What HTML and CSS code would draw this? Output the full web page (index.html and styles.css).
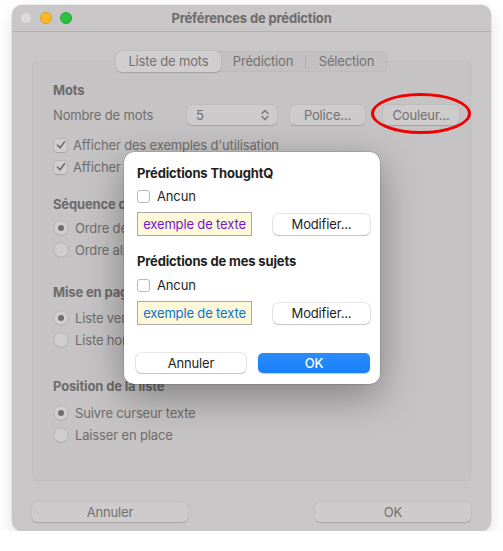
FILE: index.html
```html
<!DOCTYPE html>
<html lang="fr">
<head>
  <meta charset="UTF-8">
  <title>Préférences de prédiction</title>
  <link rel="stylesheet" href="styles.css">
</head>
<body>

  <div class="window">
    <div class="titlebar">
      <div class="lights">
        <span class="light close"></span>
        <span class="light min"></span>
        <span class="light max"></span>
      </div>
      <div class="title">Préférences de prédiction</div>
    </div>

    <div class="content">
      <div class="panel">
        <div class="segmented">
          <span class="seg seg-list active">Liste de mots</span>
          <span class="seg seg-pred">Prédiction</span>
          <span class="seg-sep"></span>
          <span class="seg seg-sel">Sélection</span>
        </div>

        <div class="heading h-mots">Mots</div>
        <div class="row count-row">
          <span class="label">Nombre de mots</span>
          <span class="popup">5
            <svg width="8" height="12" viewBox="0 0 8 12"><path d="M1 4.5 L4 1.5 L7 4.5 M1 7.5 L4 10.5 L7 7.5" fill="none" stroke="#777" stroke-width="1.4" stroke-linecap="round" stroke-linejoin="round"/></svg>
          </span>
          <span class="btn btn-police">Police...</span>
          <span class="btn btn-couleur">Couleur...</span>
        </div>
        <div class="row check-first"><span class="check on"><svg width="10" height="10" viewBox="0 0 10 10"><path d="M1.5 5.2 L4 7.8 L8.6 1.8" fill="none" stroke="#6d6d6d" stroke-width="1.6" stroke-linecap="round" stroke-linejoin="round"/></svg></span>Afficher des exemples d'utilisation</div>
        <div class="row"><span class="check on"><svg width="10" height="10" viewBox="0 0 10 10"><path d="M1.5 5.2 L4 7.8 L8.6 1.8" fill="none" stroke="#6d6d6d" stroke-width="1.6" stroke-linecap="round" stroke-linejoin="round"/></svg></span>Afficher les définitions</div>

        <div class="heading h-seq">Séquence des mots</div>
        <div class="row radio-first"><span class="radio on"></span>Ordre de fréquence</div>
        <div class="row"><span class="radio"></span>Ordre alphabétique</div>

        <div class="heading h-mise">Mise en page</div>
        <div class="row radio-first2"><span class="radio on"></span>Liste verticale</div>
        <div class="row"><span class="radio"></span>Liste horizontale</div>

        <div class="heading h-pos">Position de la liste</div>
        <div class="row radio-first3"><span class="radio on"></span>Suivre curseur texte</div>
        <div class="row"><span class="radio"></span>Laisser en place</div>
      </div>

      <div class="footer">
        <span class="btn wide">Annuler</span>
        <span class="btn wide">OK</span>
      </div>
    </div>

    <div class="circle-mark"></div>

    <div class="dialog">
      <div class="d-heading">Prédictions ThoughtQ</div>
      <div class="d-row"><span class="d-check"></span>Ancun</div>
      <div class="d-sample-row">
        <span class="sample purple">exemple de texte</span>
        <span class="d-btn modify">Modifier...</span>
      </div>

      <div class="d-heading second">Prédictions de mes sujets</div>
      <div class="d-row"><span class="d-check"></span>Ancun</div>
      <div class="d-sample-row">
        <span class="sample blue">exemple de texte</span>
        <span class="d-btn modify">Modifier...</span>
      </div>

      <div class="d-actions">
        <span class="d-btn cancel">Annuler</span>
        <span class="d-btn ok">OK</span>
      </div>
    </div>
  </div>

</body>
</html>
```

FILE: styles.css
```css
body {
  margin: 0;
  background-color: #fff;
  font-family: Inter, "Noto Sans", sans-serif;
  font-size: 13px;
  letter-spacing: -0.15px;
  color: #6f6e6e;
}
.window {
  position: relative;
  margin: 5px 0 0 12px;
  width: 479px;
  height: 526px;
  background-color: #c8c6c6;
  border-radius: 10px;
  box-shadow: 0 0 0 0.5px rgba(0,0,0,0.12), 0 6px 18px rgba(0,0,0,0.12);
  display: flex;
  flex-direction: column;
}
.titlebar {
  height: 26px;
  border-bottom: 1px solid #b3b1b1;
  display: flex;
  align-items: center;
  position: relative;
}
.lights {
  display: flex;
  gap: 8px;
  padding-left: 8px;
}
.light {
  width: 12px;
  height: 12px;
  border-radius: 50%;
  box-sizing: border-box;
}
.close { background-color: #dcdada; border: 0.5px solid #c8c6c6; }
.min { background-color: #f8b924; border: 0.5px solid #dca025; }
.max { background-color: #2ac33f; border: 0.5px solid #22a536; }
.title {
  position: absolute;
  left: 0;
  right: 0;
  text-align: center;
  font-weight: 700;
  color: #6c6b6b;
}
.content {
  padding: 29px 20px 0;
}
.panel {
  height: 420px;
  box-sizing: border-box;
  border: 1px solid #bfbdbd;
  background-color: #c5c3c3;
  border-radius: 5px;
  padding: 0 20px;
}
.segmented {
  width: 271px;
  height: 21px;
  margin: -11px auto 0;
  background-color: #c2c0c0;
  border-radius: 6px;
  box-shadow: inset 0 0 0 0.5px rgba(0,0,0,0.06);
  display: flex;
  align-items: center;
}
.seg {
  flex-shrink: 0;
  text-align: center;
  white-space: nowrap;
  line-height: 21px;
  color: #727171;
}
.seg-list { width: 105px; }
.seg-pred { width: 84px; }
.seg-sel { width: 81px; }
.seg.active {
  background-color: #cfcdcd;
  border-radius: 6px;
  box-shadow: 0 0.5px 1.5px rgba(0,0,0,0.18);
}
.seg-sep {
  width: 1px;
  height: 13px;
  background-color: #b3b1b1;
}
.heading {
  font-weight: 700;
  line-height: 22px;
  color: #6c6b6b;
}
.h-mots { margin-top: 7px; }
.h-seq { margin-top: 15px; }
.h-mise { margin-top: 20px; }
.h-pos { margin-top: 24px; }
.row {
  display: flex;
  align-items: center;
  height: 22px;
  white-space: nowrap;
}
.row > * { flex-shrink: 0; }
.count-row { margin-top: 3px; }
.check-first { margin-top: 8px; }
.radio-first { margin-top: 2px; }
.radio-first2 { margin-top: 4px; }
.radio-first3 { margin-top: 5px; }
.label {
  width: 134px;
}
.popup {
  width: 90px;
  height: 20px;
  box-sizing: border-box;
  padding: 0 8px 0 9px;
  display: flex;
  align-items: center;
  justify-content: space-between;
  background-color: #cdcbcb;
  border-radius: 5px;
  box-shadow: 0 0.5px 1px rgba(0,0,0,0.15), 0 0 0 0.5px rgba(0,0,0,0.05);
}
.btn {
  height: 20px;
  box-sizing: border-box;
  display: flex;
  align-items: center;
  justify-content: center;
  background-color: #cdcbcb;
  border-radius: 5px;
  box-shadow: 0 0.5px 1px rgba(0,0,0,0.15), 0 0 0 0.5px rgba(0,0,0,0.05);
  color: #727171;
}
.btn-police { width: 75px; margin-left: 13px; }
.btn-couleur { width: 76px; margin-left: 18px; }
.check {
  width: 13px;
  height: 13px;
  box-sizing: border-box;
  margin: 0 6px 0 1px;
  border-radius: 3px;
  background-color: #cfcdcd;
  box-shadow: 0 0 0 0.5px rgba(0,0,0,0.12), 0 0.5px 1px rgba(0,0,0,0.12);
  display: flex;
  align-items: center;
  justify-content: center;
}
.radio {
  width: 14px;
  height: 14px;
  box-sizing: border-box;
  margin: 0 7px 0 1px;
  border-radius: 50%;
  background-color: #cfcdcd;
  box-shadow: 0 0 0 0.5px rgba(0,0,0,0.12), 0 0.5px 1px rgba(0,0,0,0.12);
  display: flex;
  align-items: center;
  justify-content: center;
}
.radio.on::after {
  content: "";
  width: 6px;
  height: 6px;
  border-radius: 50%;
  background-color: #6e6d6d;
}
.footer {
  display: flex;
  justify-content: space-between;
  margin-top: 21px;
}
.btn.wide {
  width: 156px;
}
.circle-mark {
  position: absolute;
  left: 359px;
  top: 88px;
  width: 100px;
  height: 41px;
  box-sizing: border-box;
  border: 3px solid #f00000;
  border-radius: 50%;
}
.dialog {
  position: absolute;
  left: 112px;
  top: 147px;
  width: 256px;
  height: 232px;
  box-sizing: border-box;
  padding: 10px 10px 0 13px;
  background-color: #fff;
  border-radius: 10px;
  box-shadow: 0 0 0 0.5px rgba(0,0,0,0.2), 0 12px 40px rgba(0,0,0,0.35);
  color: #1e1e1e;
}
.d-heading {
  font-weight: 700;
  line-height: 22px;
}
.d-heading.second {
  margin-top: 14px;
}
.d-row {
  display: flex;
  align-items: center;
  height: 22px;
  margin-top: 1px;
}
.d-heading.second + .d-row {
  margin-top: 2px;
}
.d-check {
  width: 13px;
  height: 13px;
  box-sizing: border-box;
  border: 1px solid #b9b9b9;
  border-radius: 3px;
  margin-right: 7px;
}
.d-sample-row {
  display: flex;
  align-items: center;
  justify-content: space-between;
  margin-top: 5px;
}
.sample {
  width: 115px;
  height: 24px;
  box-sizing: border-box;
  border: 1px solid #a9a9a9;
  background-color: #fdf8d7;
  display: flex;
  align-items: center;
  justify-content: center;
}
.purple { color: #7418d0; }
.blue { color: #0a73d6; }
.d-btn {
  height: 21px;
  box-sizing: border-box;
  display: flex;
  align-items: center;
  justify-content: center;
  border-radius: 5px;
  background-color: #fff;
  box-shadow: 0 0 0 0.5px rgba(0,0,0,0.2), 0 1px 1px rgba(0,0,0,0.15);
}
.modify { width: 97px; }
.d-actions {
  display: flex;
  justify-content: space-between;
  margin-top: 28px;
  margin-left: -1px;
}
.cancel { width: 110px; height: 20px; }
.ok {
  width: 112px;
  height: 20px;
  background: linear-gradient(#2b8dfc, #1680fb);
  color: #fff;
  font-weight: 500;
  box-shadow: 0 0.5px 1px rgba(0,0,0,0.2);
}
```
